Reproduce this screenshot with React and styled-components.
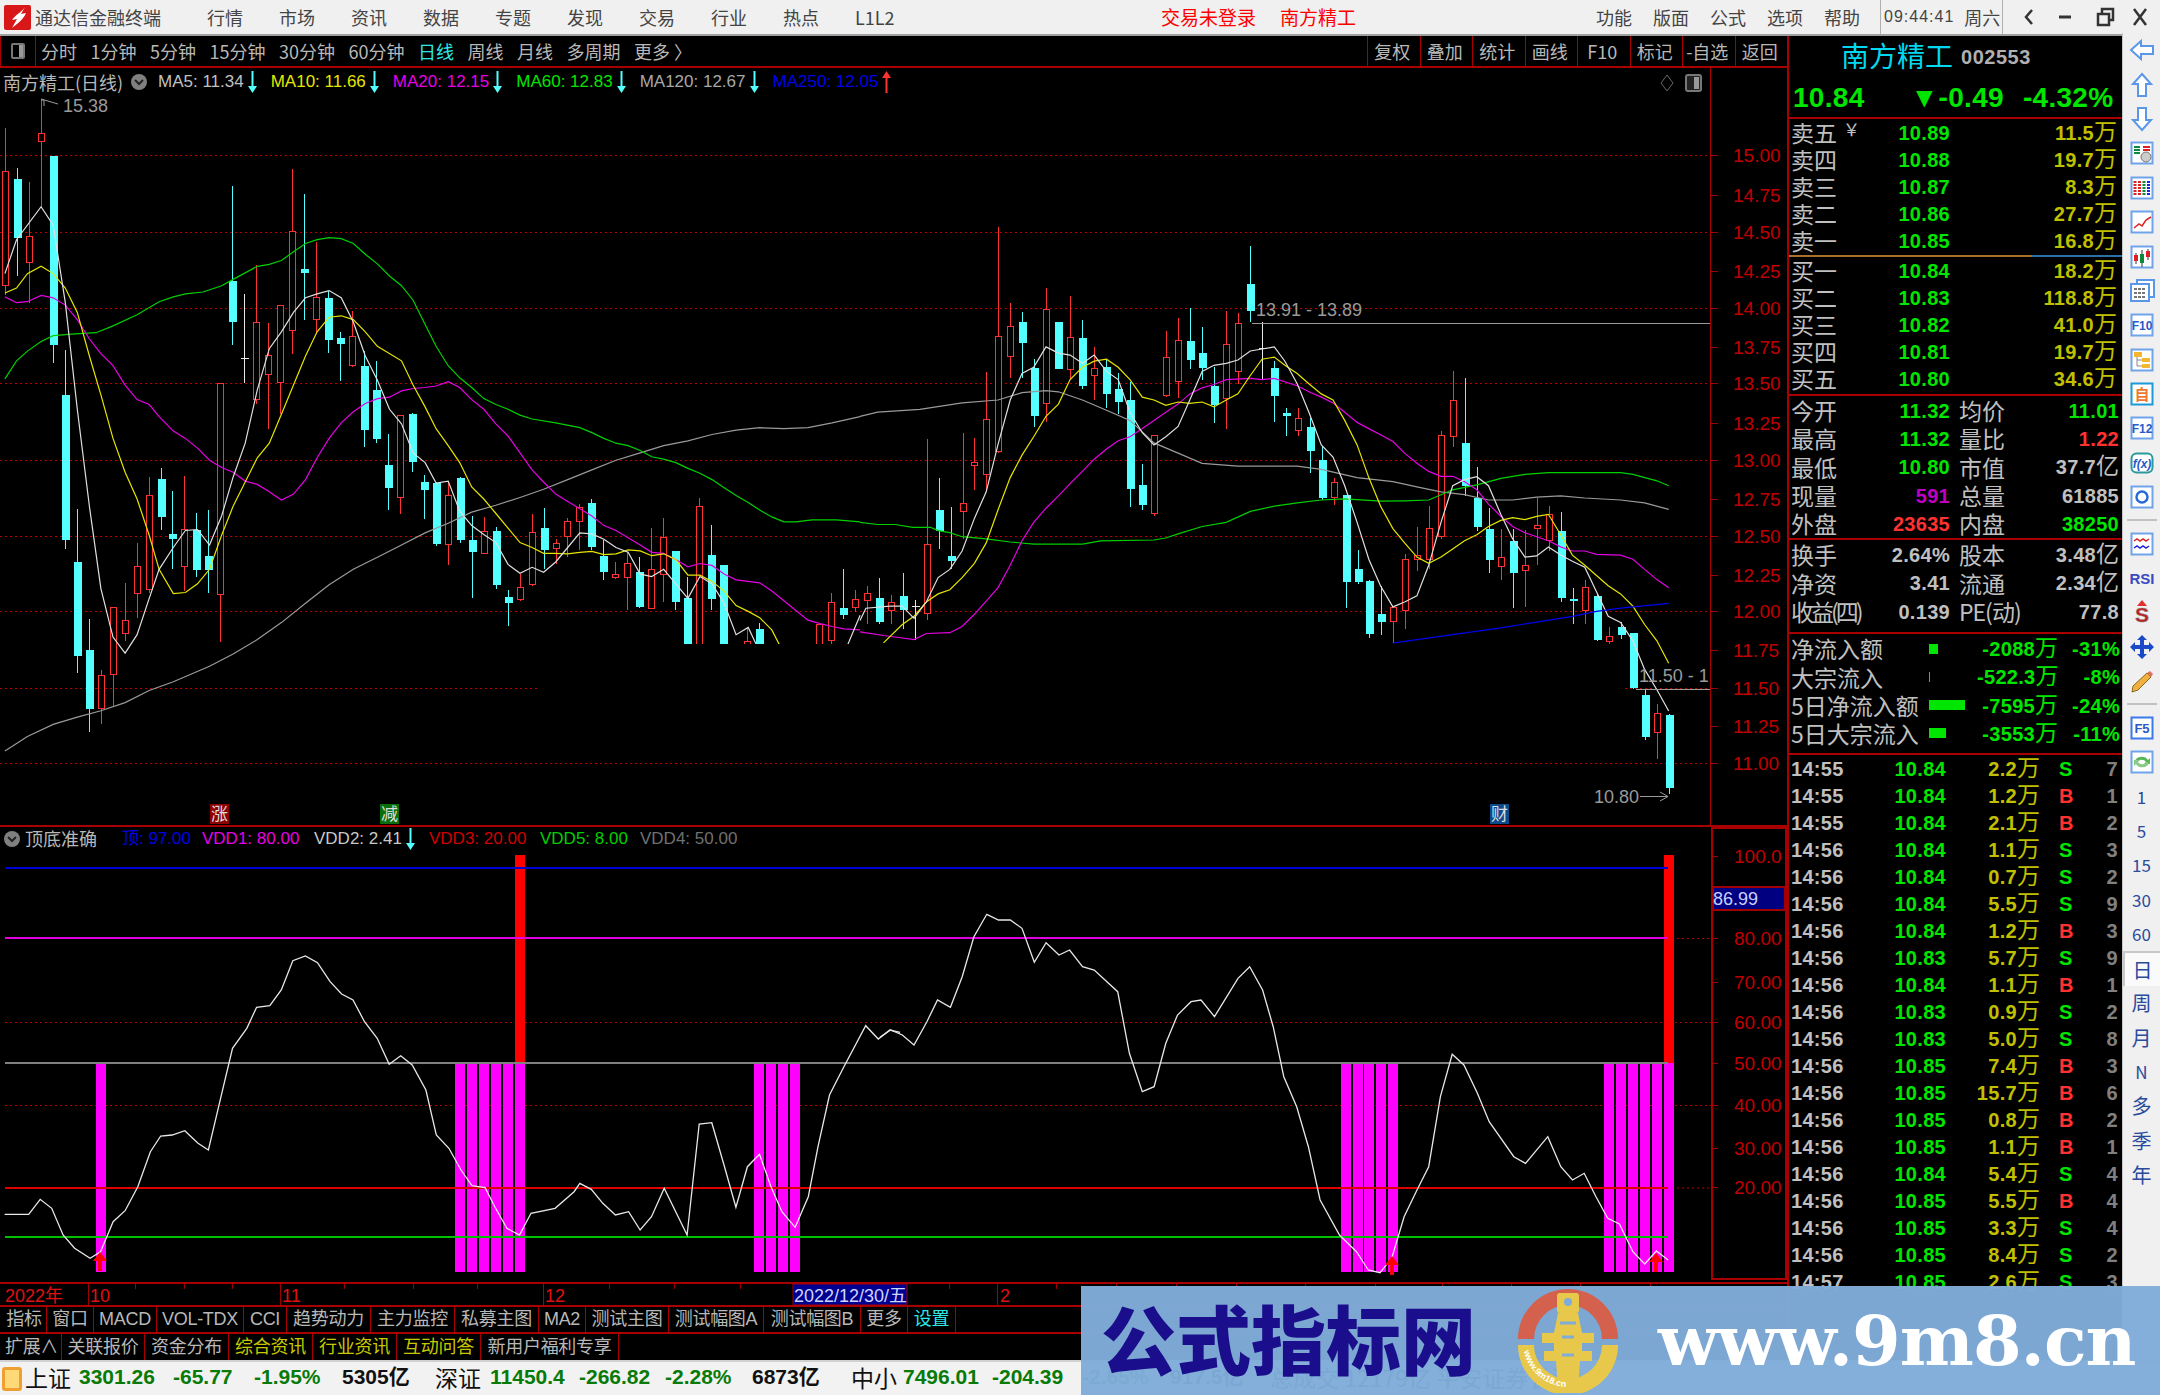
import React from 'react'
import styled, { createGlobalStyle } from 'styled-components'

const SANS = '"Liberation Sans", "Noto Sans CJK SC", sans-serif'
const CJK = '"Noto Sans CJK SC", "Liberation Sans", sans-serif'
const RED_LINE = '#a80000'

const GlobalStyle = createGlobalStyle`
    html, body { margin: 0; padding: 0; background: #000; overflow: hidden; }
    * { box-sizing: border-box; }
`

// chart data was read from two crops, so each has its own scale back to page pixels
const x7 = x => x / 1.823
const y7 = y => 70 + y / 2.063
const x8 = x => 860 + x / 1.704
const y8 = y => 200 + y / 2.45
const x9 = x => x / 1.742
const x10 = x => 880 + x / 1.704
const y9 = y => 820 + y / 3

const parse = (s, fx, fy) => s.trim().split(/\s+/).map(p => {
    const [a, b] = p.split(',').map(Number)
    return `${fx(a).toFixed(1)},${fy(b).toFixed(1)}`
}).join(' ')

const CANDLES = [
    ['r',120,210,445,465],['c',203,225,347,425],['r',232,343,398,480],['r',60,132,148,280],['c',178,178,567,605],
    ['c',578,670,970,988],['c',905,1015,1208,1245],['c',1132,1197,1318,1365],['r',1237,1250,1318,1350],['r',1108,1108,1247,1315],
    ['r',1058,1136,1162,1178],['r',975,1024,1080,1130],['r',840,878,1072,1078],['c',822,843,923,950],['c',868,958,968,1030],
    ['r',838,948,1024,1075],['c',913,948,1032,1045],['c',908,1002,1032,1078],['r',645,646,1083,1180],['c',240,435,520,568],
    ['w',462,596,596,645],['r',402,520,680,690],['r',522,588,628,740],['r',485,485,645,710],['r',205,333,538,585],
    ['c',255,410,418,515],['r',355,470,514,545],['c',455,470,557,583],['c',540,553,566,642],['r',498,550,610,612],
    ['c',580,610,743,778],['c',600,660,762,770],['c',750,815,863,908],['r',712,712,882,917],['c',708,710,808,830],
    ['c',835,850,867,927],['c',850,852,977,982],['r',848,877,978,1022],['c',840,842,970,975],['c',920,970,995,1090],
    ['r',922,952,997,998],['c',942,952,1063,1070],['c',1072,1088,1100,1146],['r',1040,1068,1092,1095],['r',915,955,1062,1065],
    ['c',903,945,990,1030],['r',968,977,988,1020],['r',925,932,962,1005],['r',895,902,932,990],['c',885,893,985,990],
    ['c',970,1003,1035,1052],['r',1015,1040,1048,1050],['r',995,1018,1046,1115],['c',1005,1035,1107,1110],['r',945,1030,1110,1112],
    ['r',925,965,1040,1098],['c',992,992,1097,1115],['c',1045,1090,1300,1300],['r',882,900,1300,1300],['c',938,1000,1092,1115],
    ['c',1022,1022,1300,1300],['c',1190,1190,1300,1300],['r',1150,1180,1300,1300],['c',1140,1153,1300,1300],['c',1190,1190,1300,1300],
    ['c',1190,1190,1300,1300],['c',1190,1190,1300,1300],['c',1190,1190,1300,1300],['r',1140,1143,1300,1300],['r',1078,1098,1177,1184],
    ['c',1030,1110,1125,1132],['r',1072,1092,1108,1118],
    ['r',945,965,982,1038],['c',925,975,1033,1040],['r',968,985,1005,1040],['c',915,970,1005,1050],['w',980,997,997,1078],
    ['r',585,845,1012,1028],['c',680,760,810,855],['c',752,872,884,905],['r',572,743,762,830],['r',583,643,650,710],
    ['r',422,537,673,710],['r',65,335,615,620],['r',252,310,383,435],['c',275,300,350,435],['c',390,412,530,557],
    ['r',215,268,498,545],['c',300,300,413,415],['r',235,338,415,440],['c',295,338,455,462],['r',360,412,430,490],
    ['c',392,408,475,510],['c',425,463,495,525],['c',445,490,707,752],['c',648,698,747,760],['r',575,578,767,775],
    ['r',322,387,478,482],['r',290,345,445,485],['c',265,345,392,415],['c',312,375,412,440],['c',410,455,503,547],
    ['r',272,353,487,560],['r',278,302,420,450],['c',113,205,272,298],['w',300,365,365,440],['c',395,412,480,545],
    ['c',510,522,530,578],['r',510,535,565,578],['c',533,555,615,668],['c',603,637,730,735],['r',682,692,730,748],
    ['c',722,722,935,1000],['c',858,905,935,940],['c',930,933,1063,1072],['c',945,1015,1033,1065],['r',995,998,1033,1085],
    ['r',868,880,1005,1050],['r',800,870,880,910],['r',750,805,880,905],['r',565,578,825,830],['r',418,490,580,605],
    ['c',437,595,700,725],['c',655,730,800,810],['c',755,805,883,915],['r',805,875,897,930],['c',805,835,913,1000],
    ['r',808,895,907,998],['r',730,798,806,895],['r',750,770,835,860],['c',765,812,975,985],['c',950,977,983,1040],
    ['r',930,950,1005,1040],['c',965,970,1078,1080],['r',1045,1070,1082,1087],['c',1035,1047,1065,1075],['c',1060,1062,1195,1197],
    ['c',1200,1212,1315,1322],['r',1235,1258,1305,1370],['c',1260,1262,1440,1455],
]

const MA5_A = '9,420 30,350 75,282 97,320 119,480 141,700 163,900 184,1070 206,1170 228,1203 250,1165 272,1090 290,1030 316,985 338,950 360,948 382,980 404,920 425,840 447,770 469,660 491,575 513,540 535,500 557,470 578,462 600,455 622,470 644,520 666,590 688,640 710,700 732,730 753,790 775,810 795,852 817,848 838,910 860,940 882,958 904,975 926,1020 948,1038 970,1026 991,1036 1013,1015 1035,985 1057,955 1079,957 1101,968 1123,985 1145,995 1167,1040 1188,1045 1210,1030 1232,1060 1254,1090 1276,1045 1298,1060 1320,1100 1342,1165 1364,1150 1385,1200 1540,1200 1568,1125'
const MA5_B = '0,1030 10,1000 51,995 72,995 92,1025 113,985 133,925 153,905 174,860 195,780 215,715 235,600 256,490 276,425 296,410 317,360 338,375 358,380 379,400 399,380 420,420 440,440 460,520 481,570 501,600 521,580 542,555 562,490 583,420 603,405 624,400 644,392 665,370 685,365 706,360 724,395 745,450 765,520 786,600 806,630 826,700 847,790 867,880 887,945 908,997 928,985 949,970 969,895 990,790 1010,700 1030,685 1051,678 1071,700 1092,770 1112,830 1133,875 1153,872 1173,850 1194,870 1214,885 1235,900 1255,960 1275,1020 1296,1035 1317,1080 1337,1150 1358,1200 1378,1252'
const MA10_A = '9,460 30,450 50,420 75,405 97,420 119,450 141,500 163,590 184,670 206,760 228,830 250,885 272,960 290,1030 316,1080 338,1078 360,1060 382,1030 404,960 425,900 447,850 469,800 491,770 513,710 535,650 557,590 578,540 600,510 622,507 644,515 666,540 688,570 732,600 753,650 775,695 795,740 817,775 838,810 860,860 882,885 904,915 926,945 948,975 970,985 991,997 1013,997 1035,998 1057,995 1079,993 1101,1000 1123,998 1145,990 1167,992 1188,1002 1210,998 1232,1010 1254,1042 1276,1042 1298,1055 1320,1075 1342,1105 1364,1117 1385,1130 1407,1155 1425,1195'
const MA10_B = '40,1085 72,1040 92,1020 113,985 133,965 153,955 174,925 195,890 215,840 235,760 256,680 276,625 296,580 317,530 338,500 358,440 379,410 399,395 420,390 440,410 460,440 481,483 501,490 521,503 542,495 562,498 583,495 603,507 624,490 644,475 665,430 685,390 706,385 724,405 745,425 765,450 786,475 806,490 826,540 847,600 867,680 887,750 908,805 928,840 949,875 969,890 990,875 1010,855 1030,835 1051,820 1071,800 1092,785 1112,778 1133,783 1153,775 1173,770 1194,820 1214,870 1235,895 1255,920 1275,945 1296,965 1317,995 1337,1040 1358,1080 1378,1135'
const MA20_A = '9,468 30,480 50,478 75,465 97,470 119,485 141,515 163,555 184,585 206,610 228,650 250,680 272,690 290,715 316,745 338,760 360,780 382,805 404,820 425,830 447,848 469,855 491,870 513,887 535,875 557,845 578,800 600,760 622,728 644,705 666,688 688,678 710,675 732,662 753,657 775,655 795,652 817,643 838,655 860,680 882,700 904,730 926,755 948,790 970,825 991,850 1013,875 1035,890 1057,905 1079,920 1101,940 1123,950 1145,965 1167,980 1188,995 1210,997 1232,1010 1254,1025 1276,1018 1298,1022 1320,1040 1342,1052 1385,1058 1407,1075 1429,1095 1451,1115 1473,1135 1495,1142 1517,1148 1539,1153 1568,1155'
const MA20_B = '0,1058 40,1067 72,1073 92,1077 113,1062 153,1060 174,1045 195,1015 235,950 256,895 276,835 296,790 317,755 338,725 358,695 379,665 399,635 420,610 440,590 460,580 481,560 501,540 521,520 542,500 562,475 583,460 603,452 624,440 665,437 685,440 706,437 745,455 765,470 786,483 806,497 826,520 847,545 867,560 887,575 908,592 928,620 949,645 969,665 990,677 1010,677 1030,690 1051,710 1071,745 1092,775 1112,800 1133,815 1153,825 1173,835 1194,850 1214,860 1235,860 1255,868 1296,870 1317,880 1337,905 1358,930 1378,950'
const MA60_A = '9,637 30,600 50,580 75,560 97,548 130,545 175,542 206,528 250,505 290,478 316,468 338,462 370,458 404,445 425,432 469,405 491,401 513,393 535,375 557,358 578,350 600,346 622,348 644,358 666,380 688,400 710,425 732,445 753,475 775,525 795,570 817,610 838,635 860,655 882,678 904,690 926,700 948,712 970,720 1013,728 1057,738 1079,748 1101,760 1123,770 1145,775 1167,785 1188,798 1210,803 1232,810 1254,822 1276,832 1298,845 1320,862 1342,878 1364,892 1385,908 1407,922 1429,932 1451,932 1480,928 1525,928 1568,932'
const MA60_B = '0,790 30,795 60,795 90,802 120,802 133,810 153,815 174,825 215,830 256,838 296,843 379,843 410,835 501,833 521,828 542,818 583,800 624,790 665,763 706,750 745,742 786,735 826,732 887,738 928,737 969,735 990,722 1010,710 1051,698 1092,682 1133,672 1173,668 1296,668 1317,672 1358,688 1378,700'
const MA120_A = '9,1405 50,1375 97,1350 141,1335 184,1322 228,1305 272,1280 316,1262 382,1230 425,1205 469,1175 513,1140 557,1100 600,1062 644,1030 688,1005 732,980 775,955 817,935 860,912 904,898 948,882 991,865 1035,845 1079,825 1123,805 1167,790 1210,775 1254,765 1298,752 1342,743 1385,738 1429,740 1473,738 1517,728 1568,715'
const MA120_B = '0,530 30,520 102,513 174,497 235,490 276,472 317,467 338,470 379,490 420,515 460,540 501,595 542,620 583,645 644,652 745,652 786,660 847,680 908,690 949,703 990,715 1030,722 1071,735 1112,735 1153,728 1194,725 1235,730 1296,735 1337,742 1378,758'
const MA250_B = '910,1085 1092,1048 1214,1020 1255,1008 1296,1000 1378,988'

const OSC_A = '8,1183 50,1183 70,1138 90,1165 110,1245 130,1285 157,1315 175,1295 197,1205 218,1172 240,1100 262,995 280,948 300,945 322,932 345,970 363,990 385,830 405,685 430,625 447,562 470,557 490,510 510,422 532,408 553,428 575,485 595,522 615,540 635,605 657,655 678,733 698,707 718,735 742,810 760,945 782,985 803,1050 822,1097 845,1103 862,1160 883,1225 905,1245 925,1180 967,1165 1000,1115 1010,1090 1030,1108 1050,1150 1072,1185 1095,1175 1115,1230 1135,1190 1157,1105 1197,1245 1218,912 1240,908 1262,1040 1282,1162 1302,1040 1323,1003 1343,1100 1362,1175 1385,1222 1408,1130 1425,980 1445,825 1470,740 1508,617 1530,657 1550,630 1568,637'
const OSC_B = '0,652 18,630 38,645 58,675 80,605 98,540 120,562 140,470 160,350 182,283 202,300 222,300 242,325 263,427 283,368 305,405 323,390 345,440 365,450 405,515 425,700 447,815 467,800 487,670 507,585 530,545 547,540 570,590 610,475 630,440 652,510 670,620 688,770 710,860 730,980 750,1140 783,1245 812,1295 832,1350 852,1358 872,1315 893,1190 915,1110 935,1040 955,830 975,703 995,735 1018,820 1038,905 1080,1010 1100,1030 1138,950 1160,1040 1180,1080 1200,1060 1220,1130 1240,1195 1260,1212 1283,1295 1303,1332 1323,1293 1343,1320'

const PRICE_LINES = [155, 232, 308, 383, 460, 536, 611, 688, 763]
const PRICE_LABELS = [
    ['15.00', 155], ['14.75', 195], ['14.50', 232], ['14.25', 271], ['14.00', 308], ['13.75', 347], ['13.50', 383], ['13.25', 423], ['13.00', 460],
    ['12.75', 499], ['12.50', 536], ['12.25', 575], ['12.00', 611], ['11.75', 650], ['11.50', 688], ['11.25', 726], ['11.00', 763],
]
const IND_LABELS = [['100.0', 856], ['80.00', 938], ['70.00', 982], ['60.00', 1022], ['50.00', 1063], ['40.00', 1105], ['30.00', 1148], ['20.00', 1187]]
const BAR_INDEX = [8, 38, 39, 40, 41, 42, 43, 63, 64, 65, 66, 112, 113, 114, 115, 116, 134, 135, 136, 137, 138, 139]
const DATE_TICKS = [135, 184, 232, 344, 413, 477, 609, 674, 740, 949, 1056, 1116, 1176, 1236, 1305, 1375, 1442, 1511, 1580, 1650]
const candleX = i => 4.9 + 11.97 * i

const ASKS = [
    ['卖五', '10.89', '11.5'], ['卖四', '10.88', '19.7'], ['卖三', '10.87', '8.3'], ['卖二', '10.86', '27.7'], ['卖一', '10.85', '16.8'],
]
const BIDS = [
    ['买一', '10.84', '18.2'], ['买二', '10.83', '118.8'], ['买三', '10.82', '41.0'], ['买四', '10.81', '19.7'], ['买五', '10.80', '34.6'],
]
const STATS = [
    ['今开', '11.32', '#00e600', '均价', '11.01', '#00e600'],
    ['最高', '11.32', '#00e600', '量比', '1.22', '#ff3232'],
    ['最低', '10.80', '#00e600', '市值', '37.7亿', '#c0c0c0'],
    ['现量', '591', '#c000c0', '总量', '61885', '#c0c0c0'],
    ['外盘', '23635', '#ff3232', '内盘', '38250', '#00e600'],
]
const FINANCE = [
    ['换手', '2.64%', '股本', '3.48亿'],
    ['净资', '3.41', '流通', '2.34亿'],
    ['收益(四)', '0.139', 'PE(动)', '77.8'],
]
const FLOWS = [
    ['净流入额', 9, '-2088', '-31%'],
    ['大宗流入', 1, '-522.3', '-8%'],
    ['5日净流入额', 36, '-7595', '-24%'],
    ['5日大宗流入', 17, '-3553', '-11%'],
]
const TICKS = [
    ['14:55', '10.84', '2.2', 'S', 7], ['14:55', '10.84', '1.2', 'B', 1], ['14:55', '10.84', '2.1', 'B', 2], ['14:56', '10.84', '1.1', 'S', 3],
    ['14:56', '10.84', '0.7', 'S', 2], ['14:56', '10.84', '5.5', 'S', 9], ['14:56', '10.84', '1.2', 'B', 3], ['14:56', '10.83', '5.7', 'S', 9],
    ['14:56', '10.84', '1.1', 'B', 1], ['14:56', '10.83', '0.9', 'S', 2], ['14:56', '10.83', '5.0', 'S', 8], ['14:56', '10.85', '7.4', 'B', 3],
    ['14:56', '10.85', '15.7', 'B', 6], ['14:56', '10.85', '0.8', 'B', 2], ['14:56', '10.85', '1.1', 'B', 1], ['14:56', '10.84', '5.4', 'S', 4],
    ['14:56', '10.85', '5.5', 'B', 4], ['14:56', '10.85', '3.3', 'S', 4], ['14:56', '10.85', '8.4', 'S', 2], ['14:57', '10.85', '2.6', 'S', 3],
]

const MA_ITEMS = [
    ['MA5: 11.34', '#c0c0c0', '#54ffff', false],
    ['MA10: 11.66', '#e6e600', '#54ffff', false],
    ['MA20: 12.15', '#e600e6', '#54ffff', false],
    ['MA60: 12.83', '#00e600', '#54ffff', false],
    ['MA120: 12.67', '#a8a8a8', '#54ffff', false],
    ['MA250: 12.05', '#0000e6', '#ff3232', true],
]
const IND_ITEMS = [
    ['顶: 97.00', '#0000e6', 80],
    ['VDD1: 80.00', '#e600e6', 112],
    ['VDD2: 2.41', '#c8c8c8', 115, true],
    ['VDD3: 20.00', '#d00000', 111],
    ['VDD5: 8.00', '#00d000', 100],
    ['VDD4: 50.00', '#707070', 0],
]

const TABS_ONE = [
    ['指标', 44], ['窗口', 47], ['MACD', 63], ['VOL-TDX', 87], ['CCI', 43], ['趋势动力', 84], ['主力监控', 84], ['私募主图', 84],
    ['MA2', 47], ['测试主图', 83], ['测试幅图A', 95], ['测试幅图B', 97], ['更多', 47], ['设置', 49, '#2ee8e8'],
]
const TABS_TWO = [
    ['扩展∧', 59], ['关联报价', 83], ['资金分布', 84], ['综合资讯', 84, '#c8c800'], ['行业资讯', 84, '#c8c800'], ['互动问答', 84, '#c8c800'], ['新用户福利专享', 139],
]
const PERIODS = ['分时', '1分钟', '5分钟', '15分钟', '30分钟', '60分钟', '日线', '周线', '月线', '多周期', '更多 〉']
const TOOLS = ['复权', '叠加', '统计', '画线', 'F10', '标记', '-自选', '返回']
const MENU = ['行情', '市场', '资讯', '数据', '专题', '发现', '交易', '行业', '热点', 'L1L2']
const RIGHT_MENU = ['功能', '版面', '公式', '选项', '帮助']
const STATUS = [
    ['上证', 'n', 54], ['3301.26', 'g', 94], ['-65.77', 'g', 81], ['-1.95%', 'g', 88], ['5305亿', 'b', 93],
    ['深证', 'n', 55], ['11450.4', 'g', 89], ['-266.82', 'g', 86], ['-2.28%', 'g', 87], ['6873亿', 'b', 99],
    ['中小', 'n', 52], ['7496.01', 'g', 89], ['-204.39', 'g', 90], ['-2.65%', 'g', 88], ['917.5亿', 'b', 100],
    ['总成交 12179亿 平安证券长沙', 'n', 400],
]

const Shell = styled.div`
    position: relative;
    width: 2160px;
    height: 1395px;
    display: flex;
    flex-direction: column;
    overflow: hidden;
    background: #000;
    font-family: ${CJK};
    line-height: 1.15;
`
const TitleBar = styled.div`
    height: 36px;
    flex: none;
    display: flex;
    align-items: center;
    background: #f0f0f0;
    border-bottom: 2px solid #a0a0a0;
    color: #444;
    font-size: 18px;
`
const Logo = styled.svg`
    width: 27px;
    height: 25px;
    margin-left: 4px;
    flex: none;
`
const AppName = styled.span`
    margin-left: 4px;
    width: 126px;
    white-space: nowrap;
`
const Menu = styled.div`
    display: flex;
    gap: 36px;
    margin-left: ${p => p.$left}px;
    white-space: nowrap;
`
const MenuItem = styled.span`
    width: 36px;
`
const Notice = styled.div`
    display: flex;
    gap: 24px;
    margin-left: 270px;
    color: #f00;
    font-size: 19px;
    white-space: nowrap;
`
const RightMenu = styled.div`
    display: flex;
    gap: 21px;
    margin-left: 240px;
    white-space: nowrap;
`
const Clock = styled.div`
    display: flex;
    align-items: center;
    height: 34px;
    margin-left: 20px;
    width: 124px;
    padding-left: 3px;
    gap: 10px;
    border-left: 1px solid #b0b0b0;
    border-right: 1px solid #b0b0b0;
    font-family: ${SANS};
    font-size: 16px;
    letter-spacing: 1px;
    white-space: nowrap;
`
const ClockDay = styled.span`
    font-family: ${CJK};
    font-size: 18px;
    letter-spacing: 0;
`
const WindowButtons = styled.svg`
    width: 157px;
    height: 26px;
    flex: none;
`
const Body = styled.div`
    flex: none;
    height: 1324px;
    display: flex;
`
const LeftColumn = styled.div`
    width: 1787px;
    flex: none;
    display: flex;
    flex-direction: column;
`
const Toolbar = styled.div`
    height: 32px;
    flex: none;
    display: flex;
    align-items: center;
    border-bottom: 2px solid ${RED_LINE};
    color: #b8b8b8;
    font-size: 18px;
`
const ViewToggle = styled.div`
    width: 36px;
    height: 30px;
    flex: none;
    display: flex;
    align-items: center;
    justify-content: center;
    border-left: 1px solid ${RED_LINE};
    border-right: 1px solid ${RED_LINE};
`
const ToggleGlyph = styled.span`
    display: block;
    width: 14px;
    height: 16px;
    border: 2px solid #777;
    border-radius: 2px;
    background: linear-gradient(90deg, transparent 55%, #999 55%);
`
const Periods = styled.div`
    display: flex;
    gap: 13.5px;
    margin-left: 5px;
    white-space: nowrap;
`
const Period = styled.span`
    color: ${p => (p.$on ? '#2ee8e8' : 'inherit')};
`
const Tools = styled.div`
    display: flex;
    margin-left: auto;
    height: 30px;
`
const ToolCell = styled.div`
    width: 52.5px;
    display: flex;
    align-items: center;
    justify-content: center;
    padding-right: 3px;
    border-left: 1px solid ${RED_LINE};
    white-space: nowrap;
`
const MainPane = styled.div`
    height: 759px;
    flex: none;
    display: flex;
    border-bottom: 2px solid ${RED_LINE};
`
const ChartColumn = styled.div`
    width: 1711px;
    flex: none;
    border-right: 1px solid ${RED_LINE};
    display: flex;
    flex-direction: column;
`
const MainLegend = styled.div`
    height: 28px;
    flex: none;
    display: flex;
    align-items: center;
    padding-left: 3px;
    font-family: ${SANS};
    font-size: 17px;
    white-space: nowrap;
    position: relative;
`
const StockLabel = styled.span`
    width: 155px;
    flex: none;
    color: #b8b8b8;
    font-family: ${CJK};
    font-size: 18px;
    display: flex;
    align-items: center;
    gap: 8px;
`
const FoldDot = styled.svg`
    width: 16px;
    height: 16px;
    flex: none;
`
const LegendItem = styled.span`
    display: inline-flex;
    align-items: center;
    color: ${p => p.$color};
    margin-right: 14px;
`
const TrendArrow = styled.svg`
    width: 9px;
    height: 22px;
    margin-left: 4px;
    flex: none;
`
const PaneTools = styled.svg`
    position: absolute;
    right: 6px;
    top: 6px;
    width: 46px;
    height: 18px;
`
const ChartSvg = styled.svg`
    display: block;
    flex: none;
`
const AxisSvg = styled.svg`
    display: block;
    flex: none;
`
const AxisText = styled.text`
    font-family: ${SANS};
    font-size: 19px;
    fill: #c00000;
`
const NoteText = styled.text`
    font-family: ${SANS};
    font-size: 18px;
    fill: #9a9a9a;
`
const BadgeText = styled.text`
    font-family: ${CJK};
    font-size: 17px;
    fill: ${p => p.$color || '#ddd'};
`
const IndicatorPane = styled.div`
    height: 455px;
    flex: none;
    display: flex;
`
const IndicatorColumn = styled.div`
    width: 1711px;
    flex: none;
    display: flex;
    flex-direction: column;
`
const IndicatorLegend = styled.div`
    height: 23px;
    flex: none;
    display: flex;
    align-items: center;
    padding-left: 4px;
    font-family: ${SANS};
    font-size: 17px;
    white-space: nowrap;
`
const IndicatorName = styled.span`
    width: 118px;
    display: flex;
    align-items: center;
    gap: 5px;
    color: #b8b8b8;
    font-family: ${CJK};
    font-size: 18px;
`
const IndicatorItem = styled.span`
    display: inline-flex;
    align-items: center;
    color: ${p => p.$color};
    width: ${p => (p.$w ? `${p.$w}px` : 'auto')};
`
const IndicatorAxis = styled.div`
    width: 76px;
    flex: none;
    border: 2px solid ${RED_LINE};
    margin-bottom: 2px;
`
const DateAxis = styled.div`
    flex: none;
    height: 23px;
    width: 1787px;
    border-top: 2px solid ${RED_LINE};
`
const DateSvg = styled.svg`
    display: block;
`
const DateText = styled.text`
    font-family: ${SANS};
    font-size: 18px;
    fill: ${p => p.$color || '#e01010'};
`
const TabRow = styled.div`
    height: ${p => p.$h}px;
    flex: none;
    display: flex;
    border-top: 2px solid ${RED_LINE};
    padding-left: 2px;
    color: #b8b8b8;
    font-size: 18px;
    white-space: nowrap;
`
const Tab = styled.div`
    width: ${p => p.$w}px;
    flex: none;
    display: flex;
    align-items: center;
    justify-content: center;
    color: ${p => p.$color || 'inherit'};
    border-left: ${p => (p.$first ? 'none' : `1px solid ${RED_LINE}`)};
    border-right: ${p => (p.$last ? `1px solid ${RED_LINE}` : 'none')};
    font-family: ${SANS}, ${CJK};
    letter-spacing: -0.3px;
`
const QuotePanel = styled.div`
    width: 335px;
    flex: none;
    border-left: 2px solid ${RED_LINE};
    color: #c0c0c0;
    overflow: hidden;
    font-size: 23px;
`
const PanelHead = styled.div`
    height: 83px;
    border-bottom: 2px solid ${RED_LINE};
    display: flex;
    flex-direction: column;
`
const NameLine = styled.div`
    height: 43px;
    display: flex;
    align-items: center;
    padding: 0 0 5px 52px;
    gap: 8px;
`
const StockName = styled.span`
    color: #00d8f0;
    font-size: 28px;
    white-space: nowrap;
`
const StockCode = styled.span`
    color: #b0b0b0;
    font-family: ${SANS};
    font-weight: 700;
    font-size: 20px;
    letter-spacing: 0.5px;
    margin-top: 5px;
`
const PriceLine = styled.div`
    height: 38px;
    display: flex;
    align-items: center;
    color: #00e600;
    font-family: ${SANS};
    font-weight: 700;
    font-size: 28px;
    letter-spacing: 0.3px;
    white-space: nowrap;
    padding-left: 4px;
`
const PriceChange = styled.span`
    margin-left: ${p => p.$left}px;
`
const Row = styled.div`
    height: ${p => p.$h}px;
    display: flex;
    align-items: center;
    padding-left: 2px;
    white-space: nowrap;
`
const Label = styled.span`
    width: ${p => p.$w || 90}px;
    flex: none;
    display: flex;
    align-items: center;
    gap: 6px;
    margin-left: ${p => p.$left || 0}px;
    letter-spacing: ${p => p.$track || 0}px;
`
const YuanMark = styled.span`
    font-family: ${SANS};
    font-size: 17px;
    margin-top: -4px;
`
const Num = styled.span`
    width: ${p => (p.$w ? `${p.$w}px` : 'auto')};
    flex: ${p => (p.$w ? 'none' : '1')};
    text-align: right;
    padding-right: ${p => p.$pad || 0}px;
    margin-top: 2px;
    color: ${p => p.$color || '#c0c0c0'};
    font-family: ${SANS};
    font-weight: 700;
    font-size: 20px;
    letter-spacing: 0.3px;
`
const Unit = styled.span`
    font-family: ${CJK};
    font-weight: 400;
    font-size: 23px;
    letter-spacing: 0;
    line-height: 0;
`
const BookDivider = styled.div`
    height: 3px;
    background: linear-gradient(90deg, #a87028 0, #a87028 243px, #2c70a8 243px);
    border-top: 1px solid #000;
`
const Section = styled.div`
    padding-bottom: ${p => p.$pad || 0}px;
    border-bottom: 2px solid ${RED_LINE};
`
const FlowCell = styled.span`
    width: 48px;
    flex: none;
    display: flex;
    align-items: center;
`
const FlowBar = styled.span`
    display: block;
    height: 10px;
    width: ${p => p.$w}px;
    background: #00e600;
`
const SideMark = styled.span`
    width: 20px;
    flex: none;
    margin-left: 19px;
    margin-top: 2px;
    color: ${p => (p.$buy ? '#ff3232' : '#00e600')};
    font-family: ${SANS};
    font-weight: 700;
    font-size: 20px;
`
const SideBar = styled.div`
    flex: 1;
    background: #f0f0f0;
    display: flex;
    flex-direction: column;
    align-items: center;
    margin-top: -3px;
    overflow: hidden;
    border-left: 1px solid #c8c8c8;
`
const SideBtn = styled.div`
    width: 100%;
    height: 34.4px;
    flex: none;
    display: flex;
    align-items: center;
    justify-content: center;
    color: #2a4a9c;
    font-family: ${CJK};
    font-size: ${p => (p.$small ? 17 : 20)}px;
    background: ${p => (p.$on ? '#fafafa' : 'transparent')};
    border-top: ${p => (p.$on ? '2px solid #c8c8c8' : 'none')};
    border-left: ${p => (p.$on ? '2px solid #c8c8c8' : 'none')};
`
const SideIcon = styled.svg`
    width: 24px;
    height: 24px;
    overflow: visible;
`
const SideSep = styled.div`
    height: 12px;
    width: 30px;
    flex: none;
    display: flex;
    align-items: center;
    &::after {
        content: '';
        display: block;
        width: 100%;
        height: 2px;
        background: #c0c0c0;
    }
`
const StatusBar = styled.div`
    height: 35px;
    flex: none;
    display: flex;
    align-items: center;
    background: #f2f2f2;
    border-top: 2px solid #d0d0d0;
    padding-left: 2px;
    white-space: nowrap;
`
const StatusIcon = styled.span`
    display: block;
    width: 20px;
    height: 24px;
    margin-right: 3px;
    flex: none;
    border: 3px solid #f0a030;
    border-radius: 3px;
    background: #ffd878;
`
const StatusCell = styled.span`
    width: ${p => p.$w}px;
    flex: none;
    margin-top: -2px;
    color: ${p => (p.$kind === 'g' ? '#087a08' : '#111')};
    font-family: ${p => (p.$kind === 'n' ? CJK : SANS)};
    font-weight: ${p => (p.$kind === 'n' ? 400 : 700)};
    font-size: ${p => (p.$kind === 'n' ? 23 : 21)}px;
`
const Watermark = styled.div`
    position: absolute;
    left: 1081px;
    top: 1286px;
    width: 1079px;
    height: 109px;
    display: flex;
    align-items: center;
    padding-left: 20px;
    background: rgba(127, 172, 217, 0.97);
`
const MarkCn = styled.span`
    width: 415px;
    flex: none;
    margin-top: -8px;
    color: #1b0e8c;
    font-family: ${CJK};
    font-weight: 900;
    font-size: 75px;
    line-height: 1;
    white-space: nowrap;
`
const MarkLogo = styled.svg`
    width: 104px;
    height: 104px;
    flex: none;
`
const MarkUrl = styled.span`
    margin-left: 38px;
    color: #fff;
    font-family: "DejaVu Serif", "Liberation Serif", serif;
    font-weight: 700;
    font-size: 70px;
    line-height: 1;
    white-space: nowrap;
    letter-spacing: -1px;
`

const Fold = () => (
    <FoldDot viewBox="0 0 16 16">
        <circle cx="8" cy="8" r="8" fill="#808080" />
        <path d="M4 6l4 4 4-4" fill="none" stroke="#222" strokeWidth="2" />
    </FoldDot>
)

const Trend = ({ color, up }) => (
    <TrendArrow viewBox="0 0 9 22">
        {up
            ? <path d="M4.5 0L9 7H5.5V22H3.5V7H0z" fill={color} />
            : <path d="M4.5 22L9 15H5.5V0H3.5V15H0z" fill={color} />}
    </TrendArrow>
)

const Candle = ({ data, i }) => {
    const [c, w, t, b, l] = data
    const fy = i < 72 ? y7 : y8
    const x = Math.round(candleX(i)) + 0.5
    const [yw, yt, yb, yl] = [fy(w), fy(t), fy(b), fy(l)]
    if (c === 'w') {
        return (
            <g stroke="#e8e8e8">
                <line x1={x} x2={x} y1={yw} y2={yl} />
                <line x1={x - 4} x2={x + 4} y1={yt} y2={yt} />
            </g>
        )
    }
    if (c === 'c') {
        return (
            <g>
                <line x1={x} x2={x} y1={yw} y2={yl} stroke="#54ffff" />
                <rect x={x - 4} y={yt} width="8" height={Math.max(yb - yt, 2)} fill="#54ffff" />
            </g>
        )
    }
    return (
        <g stroke="#ff3232">
            <line x1={x} x2={x} y1={yw} y2={yt} />
            <line x1={x} x2={x} y1={yb} y2={yl} />
            <rect x={x - 3} y={yt} width="6" height={Math.max(yb - yt, 3)} fill="#000" />
        </g>
    )
}

const MA = ({ d, fx, fy, color, width = 1.2 }) => (
    <polyline points={parse(d, fx, fy)} fill="none" stroke={color} strokeWidth={width} />
)

const MainChart = () => (
    <ChartSvg width="1710" height="730" viewBox="0 96 1710 730">
        {PRICE_LINES.map(y => (
            <line key={y} x1="0" x2="1710" y1={y + 0.5} y2={y + 0.5} stroke="#b80000" strokeDasharray="2 3" />
        ))}
        <g shapeRendering="crispEdges">
            {CANDLES.map((c, i) => <Candle key={i} data={c} i={i} />)}
        </g>
        <MA d={MA120_A} fx={x7} fy={y7} color="#9a9a9a" />
        <MA d={MA120_B} fx={x8} fy={y8} color="#9a9a9a" />
        <MA d={MA60_A} fx={x7} fy={y7} color="#00d000" />
        <MA d={MA60_B} fx={x8} fy={y8} color="#00d000" />
        <MA d={MA20_A} fx={x7} fy={y7} color="#e600e6" />
        <MA d={MA20_B} fx={x8} fy={y8} color="#e600e6" />
        <MA d={MA10_A} fx={x7} fy={y7} color="#e6e600" />
        <MA d={MA10_B} fx={x8} fy={y8} color="#e6e600" />
        <MA d={MA5_A} fx={x7} fy={y7} color="#e0e0e0" />
        <MA d={MA5_B} fx={x8} fy={y8} color="#e0e0e0" />
        <MA d={MA250_B} fx={x8} fy={y8} color="#0000f0" />
        <rect x="537" y="644" width="1085" height="94" fill="#000" />
        <path d="M41 100h3v6M41 99l17 5" fill="none" stroke="#9a9a9a" />
        <NoteText x="63" y="112">15.38</NoteText>
        <line x1="1252" x2="1710" y1="323.5" y2="323.5" stroke="#9a9a9a" />
        <NoteText x="1256" y="316">13.91 - 13.89</NoteText>
        <line x1="1636" x2="1710" y1="689.5" y2="689.5" stroke="#9a9a9a" />
        <NoteText x="1639" y="682">11.50 - 1</NoteText>
        <NoteText x="1594" y="803">10.80</NoteText>
        <path d="M1640 796.5h28M1660 792l8 4.500-8 4.500" fill="none" stroke="#9a9a9a" />
        <rect x="210" y="804" width="19" height="20" fill="#8c0000" />
        <BadgeText x="211" y="820">涨</BadgeText>
        <rect x="380" y="804" width="19" height="20" fill="#0a6e0a" />
        <BadgeText x="381" y="820">减</BadgeText>
        <rect x="1490" y="804" width="19" height="20" fill="#0c4a8c" />
        <BadgeText x="1491" y="820">财</BadgeText>
    </ChartSvg>
)

const MainAxis = () => (
    <AxisSvg width="76" height="757" viewBox="1711 68 76 757">
        {PRICE_LABELS.map(([t, y]) => (
            <g key={t}>
                <line x1="1711" x2="1718" y1={y + 0.5} y2={y + 0.5} stroke="#a00000" />
                <AxisText x="1733" y={y + 7}>{t}</AxisText>
            </g>
        ))}
    </AxisSvg>
)

const GUIDES = [[868, '#0000d8'], [938, '#e000e0'], [1063, '#808080'], [1187.5, '#e00000'], [1237, '#00c000']]

const UpArrow = ({ x, y }) => (
    <path d={`M${x} ${y}l7 9h-5v10h-4v-10h-5z`} fill="#ff0000" />
)

const IndicatorChart = () => (
    <ChartSvg width="1711" height="430" viewBox="0 850 1711 430">
        {[938, 1022, 1105, 1187.5].map(y => (
            <line key={y} x1={y === 1022 || y === 1105 ? 5 : 1667} x2="1711" y1={y + 0.5} y2={y + 0.5} stroke="#b80000" strokeDasharray="2 3" />
        ))}
        <g shapeRendering="crispEdges">
            {BAR_INDEX.map(i => (
                <rect key={i} x={Math.round(candleX(i)) - 5} y="1063" width="10" height="209" fill="#ff00ff" />
            ))}
            <rect x={Math.round(candleX(43)) - 5} y="855" width="10" height="208" fill="#ff0000" />
            <rect x={Math.round(candleX(139)) - 5} y="855" width="10" height="208" fill="#ff0000" />
            {GUIDES.map(([y, color]) => (
                <line key={y} x1="5" x2="1667.500" y1={y} y2={y} stroke={color} strokeWidth="2" />
            ))}
        </g>
        <polyline points={parse(OSC_A, x9, y9)} fill="none" stroke="#e8e8e8" strokeWidth="1.300" />
        <polyline points={parse(OSC_B, x10, y9)} fill="none" stroke="#e8e8e8" strokeWidth="1.300" />
        <UpArrow x={100} y={1252} />
        <UpArrow x={1392} y={1256} />
        <UpArrow x={1656} y={1253} />
    </ChartSvg>
)

const IndicatorScale = () => (
    <AxisSvg width="72" height="449" viewBox="1713 829 72 449">
        {IND_LABELS.map(([t, y]) => (
            <g key={t}>
                <line x1="1713" x2="1718" y1={y + 0.5} y2={y + 0.5} stroke="#a00000" />
                <AxisText x="1734" y={y + 7}>{t}</AxisText>
            </g>
        ))}
        <rect x="1713" y="887" width="72" height="23" fill="#000080" stroke="#a00000" strokeWidth="2" />
        <DateText x="1713" y="905" $color="#c8d0ff">86.99</DateText>
    </AxisSvg>
)

const DateScale = () => (
    <DateSvg width="1787" height="21" viewBox="0 1284 1787 21">
        {[88, 280, 543, 997].map(x => (
            <line key={x} x1={x + 0.5} x2={x + 0.5} y1="1284" y2="1305" stroke="#a00000" />
        ))}
        {DATE_TICKS.map(x => (
            <line key={x} x1={x + 0.5} x2={x + 0.5} y1="1284" y2="1289" stroke="#a00000" />
        ))}
        <DateText x="5" y="1302">2022年</DateText>
        <DateText x="90" y="1302">10</DateText>
        <DateText x="282" y="1302">11</DateText>
        <DateText x="545" y="1302">12</DateText>
        <rect x="793" y="1284" width="114" height="21" fill="#000090" stroke="#a00000" />
        <DateText x="794" y="1302" $color="#d0d4ff">2022/12/30/五</DateText>
        <DateText x="1000" y="1302">2</DateText>
    </DateSvg>
)

// the right hand tool strip, one small drawing per button
const FRAME = <rect x="1.500" y="1.500" width="21" height="21" fill="#fff" stroke="#6ea4ea" strokeWidth="2" />
const BLUE = '#5b97e8'
const frameText = (t, color, size = 12) => (
    <>
        {FRAME}
        <text x="12" y="17" fontFamily={SANS} fontSize={size} fontWeight="700" textAnchor="middle" fill={color}>{t}</text>
    </>
)
const SIDE_ICONS = [
    <path d="M1 12l10-9v5h12v8H11v5z" fill="#fff" stroke={BLUE} strokeWidth="2" />,
    <path d="M12 1l9 10h-5v12H8V11H3z" fill="#fff" stroke={BLUE} strokeWidth="2" />,
    <path d="M12 23l9-10h-5V1H8v12H3z" fill="#fff" stroke={BLUE} strokeWidth="2" />,
    <>{FRAME}<path d="M4 6h6M4 9h6M4 12h6" stroke="#0a8a3a" strokeWidth="2" /><path d="M13 6h7M13 9h7" stroke="#e02020" strokeWidth="2" /><circle cx="16" cy="16" r="5" fill="#ccc" stroke="#777" /></>,
    <>{FRAME}<path d="M5 5v14" stroke="#e02020" strokeWidth="3" strokeDasharray="2 1" /><path d="M9.500 5v14" stroke="#e02020" strokeWidth="3" strokeDasharray="2 1" /><path d="M14 5v14" stroke="#0a8a3a" strokeWidth="3" strokeDasharray="2 1" /><path d="M18.500 5v14" stroke="#2020e0" strokeWidth="3" strokeDasharray="2 1" /></>,
    <>{FRAME}<path d="M4 18l5-4 3 2 4-6 5-3" fill="none" stroke="#e02020" strokeWidth="1.500" /></>,
    <>{FRAME}<path d="M6 8v11M12 5v17M18 4v11" stroke="#333" /><rect x="4" y="10" width="4" height="6" fill="#e02020" /><rect x="10" y="9" width="4" height="9" fill="#0a8a3a" /><rect x="16" y="6" width="4" height="6" fill="#e02020" /></>,
    <><rect x="7" y="1" width="17" height="17" fill="#fff" stroke={BLUE} strokeWidth="2" /><rect x="1" y="5" width="18" height="17" fill="#fff" stroke={BLUE} strokeWidth="2" /><path d="M4 10h12M4 14h12M4 18h12" stroke="#777" strokeWidth="2" strokeDasharray="3 1" /></>,
    frameText('F10', '#2a5ac8'),
    <>{FRAME}<rect x="4" y="4" width="8" height="5" fill="#f4b830" /><rect x="12" y="10" width="8" height="4" fill="#f4b830" /><rect x="12" y="16" width="8" height="4" fill="#f4b830" /><path d="M7 9v9h5M7 12h5" fill="none" stroke="#888" /></>,
    <><rect x="1.500" y="1.500" width="21" height="21" fill="#fff" stroke="#1a9ad8" strokeWidth="2" /><text x="12" y="18" fontFamily={CJK} fontSize="15" fontWeight="700" textAnchor="middle" fill="#f07830">自</text></>,
    frameText('F12', '#2a5ac8'),
    <><rect x="1.500" y="2.500" width="21" height="19" rx="5" fill="#fff" stroke="#2a9a9a" strokeWidth="2" /><text x="12" y="17" fontFamily={SANS} fontSize="12" fontStyle="italic" fontWeight="700" textAnchor="middle" fill="#2a5ac8">f(x)</text></>,
    <>{FRAME}<circle cx="12" cy="12" r="5.500" fill="none" stroke="#2a6ad8" strokeWidth="2.500" /></>,
    null,
    <>{FRAME}<path d="M4 9l3-2 3 2 3-2 3 2 3-2" fill="none" stroke="#e02020" strokeWidth="1.500" /><path d="M4 16l3-2 3 2 3-2 3 2 3-2" fill="none" stroke="#2020e0" strokeWidth="1.500" /></>,
    <text x="12" y="18" fontFamily={SANS} fontSize="15" fontWeight="700" textAnchor="middle" fill="#3a4ac0">RSI</text>,
    <><path d="M12 0l5 6H7z" fill="#e03030" /><text x="12" y="22" fontFamily={SANS} fontSize="21" fontWeight="700" textAnchor="middle" fill="#c02020" stroke="#888" strokeWidth="0.500">S</text></>,
    <path d="M12 0l5 5h-3v5h5V7l5 5-5 5v-3h-5v5h3l-5 5-5-5h3v-5H5v3l-5-5 5-5v3h5V5H7z" fill="#1a4ac8" />,
    <><path d="M3 17L17 4l4 4L8 21l-6 2z" fill="#f0b040" stroke="#8a6a20" /><path d="M17 4l4 4 2-3-3-3z" fill="#e07060" /></>,
    null,
    <><rect x="1.500" y="1.500" width="21" height="21" fill="#fff" stroke="#3a7ae8" strokeWidth="2" /><text x="12" y="17" fontFamily={SANS} fontSize="13" fontWeight="700" textAnchor="middle" fill="#2a5ac8">F5</text></>,
    <>{FRAME}<path d="M5 11a7 6 0 0 1 13-1l2-2v6h-6l2-2a5 4 0 0 0-9 0z" fill="#58b858" /><path d="M19 13a7 6 0 0 1-13 1l-2 2v-6h6l-2 2a5 4 0 0 0 9 0z" fill="#88cc88" /></>,
]
const SIDE_TEXT = [['1', 1], ['5', 1], ['15', 1], ['30', 1], ['60', 1], ['日', 0, 1], ['周'], ['月'], ['N', 1], ['多'], ['季'], ['年']]

const Wan = () => <Unit>万</Unit>

const App = () => (
    <Shell>
        <GlobalStyle />
        <TitleBar>
            <Logo viewBox="0 0 27 25">
                <rect width="27" height="25" rx="2" fill="#d81818" />
                <path d="M21 2c-3 5-9 7-13 13l5-1-5 9c6-5 11-8 14-15l-5 1z" fill="#fff" />
            </Logo>
            <AppName>通达信金融终端</AppName>
            <Menu $left={46}>
                {MENU.map(m => <MenuItem key={m}>{m}</MenuItem>)}
            </Menu>
            <Notice>
                <span>交易未登录</span>
                <span>南方精工</span>
            </Notice>
            <RightMenu>
                {RIGHT_MENU.map(m => <MenuItem key={m}>{m}</MenuItem>)}
            </RightMenu>
            <Clock>
                <span>09:44:41</span>
                <ClockDay>周六</ClockDay>
            </Clock>
            <WindowButtons viewBox="0 0 157 26">
                <path d="M29 6l-6 7 6 7" fill="none" stroke="#333" strokeWidth="2.500" />
                <path d="M56 13h12" stroke="#333" strokeWidth="3" />
                <path d="M95 10h11v11H95zM99 10V5h11v11h-4" fill="none" stroke="#333" strokeWidth="2.500" />
                <path d="M131 5l12 16M143 5l-12 16" stroke="#333" strokeWidth="2.500" />
            </WindowButtons>
        </TitleBar>
        <Body>
            <LeftColumn>
                <Toolbar>
                    <ViewToggle><ToggleGlyph /></ViewToggle>
                    <Periods>
                        {PERIODS.map(p => <Period key={p} $on={p === '日线'}>{p}</Period>)}
                    </Periods>
                    <Tools>
                        {TOOLS.map(t => <ToolCell key={t}>{t}</ToolCell>)}
                    </Tools>
                </Toolbar>
                <MainPane>
                    <ChartColumn>
                        <MainLegend>
                            <StockLabel>南方精工(日线)<Fold /></StockLabel>
                            {MA_ITEMS.map(([t, color, arrow, up]) => (
                                <LegendItem key={t} $color={color}>
                                    {t}
                                    <Trend color={arrow} up={up} />
                                </LegendItem>
                            ))}
                            <PaneTools viewBox="0 0 46 18">
                                <path d="M9 1l6 8-6 8-6-8z" fill="none" stroke="#666" />
                                <rect x="28" y="1" width="15" height="16" rx="2" fill="#222" stroke="#777" strokeWidth="2" />
                                <rect x="36" y="3" width="5" height="12" fill="#999" />
                            </PaneTools>
                        </MainLegend>
                        <MainChart />
                    </ChartColumn>
                    <MainAxis />
                </MainPane>
                <IndicatorPane>
                    <IndicatorColumn>
                        <IndicatorLegend>
                            <IndicatorName><Fold />顶底准确</IndicatorName>
                            {IND_ITEMS.map(([t, color, w, arrow]) => (
                                <IndicatorItem key={t} $color={color} $w={w}>
                                    {t}
                                    {arrow && <Trend color="#54ffff" />}
                                </IndicatorItem>
                            ))}
                        </IndicatorLegend>
                        <IndicatorChart />
                    </IndicatorColumn>
                    <IndicatorAxis>
                        <IndicatorScale />
                    </IndicatorAxis>
                </IndicatorPane>
                <DateAxis><DateScale /></DateAxis>
                <TabRow $h={27}>
                    {TABS_ONE.map(([t, w, color], i) => (
                        <Tab key={t} $w={w} $color={color} $first={i === 0} $last={i === TABS_ONE.length - 1}>{t}</Tab>
                    ))}
                </TabRow>
                <TabRow $h={28}>
                    {TABS_TWO.map(([t, w, color], i) => (
                        <Tab key={t} $w={w} $color={color} $first={i === 0} $last={i === TABS_TWO.length - 1}>{t}</Tab>
                    ))}
                </TabRow>
            </LeftColumn>
            <QuotePanel>
                <PanelHead>
                    <NameLine>
                        <StockName>南方精工</StockName>
                        <StockCode>002553</StockCode>
                    </NameLine>
                    <PriceLine>
                        <span>10.84</span>
                        <PriceChange $left={46}>▼-0.49</PriceChange>
                        <PriceChange $left={19}>-4.32%</PriceChange>
                    </PriceLine>
                </PanelHead>
                {ASKS.map(([l, p, v], i) => (
                    <Row key={l} $h={27}>
                        <Label>{l}{i === 0 && <YuanMark>￥</YuanMark>}</Label>
                        <Num $w={69} $color="#00e600">{p}</Num>
                        <Num $color="#c0c000" $pad={5}>{v}<Wan /></Num>
                    </Row>
                ))}
                <BookDivider />
                {BIDS.map(([l, p, v]) => (
                    <Row key={l} $h={27}>
                        <Label>{l}</Label>
                        <Num $w={69} $color="#00e600">{p}</Num>
                        <Num $color="#c0c000" $pad={5}>{v}<Wan /></Num>
                    </Row>
                ))}
                <Section $pad={2} />
                <Section $pad={1}>
                    {STATS.map(([a, av, ac, b, bv, bc]) => (
                        <Row key={a} $h={28.3}>
                            <Label>{a}</Label>
                            <Num $w={69} $color={ac}>{av}</Num>
                            <Label $w={50} $left={9}>{b}</Label>
                            <Num $color={bc} $pad={3}>{bv.replace('亿', '')}{bv.includes('亿') && <Unit>亿</Unit>}</Num>
                        </Row>
                    ))}
                </Section>
                <Section $pad={7}>
                    {FINANCE.map(([a, av, b, bv]) => (
                        <Row key={a} $h={28.3}>
                            <Label $track={a.length > 2 ? -3 : 0}>{a}</Label>
                            <Num $w={69}>{av}</Num>
                            <Label $w={50} $left={9} $track={b.length > 2 ? -1 : 0}>{b}</Label>
                            <Num $pad={3}>{bv.replace('亿', '')}{bv.includes('亿') && <Unit>亿</Unit>}</Num>
                        </Row>
                    ))}
                </Section>
                <Section $pad={5}>
                    {FLOWS.map(([l, w, v, pct]) => (
                        <Row key={l} $h={28.3}>
                            <Label $w={138}>{l}</Label>
                            <FlowCell><FlowBar $w={w} /></FlowCell>
                            <Num $w={81} $color="#00e600">{v}<Wan /></Num>
                            <Num $color="#00e600" $pad={2}>{pct}</Num>
                        </Row>
                    ))}
                </Section>
                {TICKS.map(([time, p, v, side, n], i) => (
                    <Row key={i} $h={27}>
                        <Num $w={52}>{time}</Num>
                        <Num $w={103} $color="#00e600">{p}</Num>
                        <Num $w={94} $color="#c0c000">{v}<Wan /></Num>
                        <SideMark $buy={side === 'B'}>{side}</SideMark>
                        <Num $color="#808080" $pad={4}>{n}</Num>
                    </Row>
                ))}
            </QuotePanel>
            <SideBar>
                {SIDE_ICONS.map((icon, i) => (icon
                    ? <SideBtn key={i}><SideIcon viewBox="0 0 24 24">{icon}</SideIcon></SideBtn>
                    : <SideSep key={i} />))}
                {SIDE_TEXT.map(([t, small, on]) => (
                    <SideBtn key={t} $small={small} $on={on}>{t}</SideBtn>
                ))}
            </SideBar>
        </Body>
        <StatusBar>
            <StatusIcon />
            {STATUS.map(([t, kind, w]) => <StatusCell key={t} $kind={kind} $w={w}>{t}</StatusCell>)}
        </StatusBar>
        <Watermark>
            <MarkCn>公式指标网</MarkCn>
            <MarkLogo viewBox="0 0 104 104">
                <defs>
                    <path id="ringText" d="M8 62a45 45 0 0 0 44 36" />
                </defs>
                <path d="M2 50a50 50 0 0 1 100 0H86a34 34 0 0 0-68 0z" fill="#d4604e" />
                <path d="M2 56a50 50 0 0 0 100 0H86a34 34 0 0 1-68 0z" fill="#e8c84a" />
                <rect x="41" y="4" width="22" height="20" rx="3" fill="#e8c84a" />
                <circle cx="52" cy="13" r="4" fill="#7facd9" />
                <path d="M42 24h20l4 20h12v10H66v8h10v10H64l-2 28H42l-2-28H28V62h10v-8H26V44h12z" fill="#e8c84a" />
                <path d="M44 34h16M46 48h12M46 66h12" stroke="#7facd9" strokeWidth="3" />
                <text fontFamily={SANS} fontSize="9" fontWeight="700" fill="#fff">
                    <textPath href="#ringText">www.9m18.cn</textPath>
                </text>
            </MarkLogo>
            <MarkUrl>www.9m8.cn</MarkUrl>
        </Watermark>
    </Shell>
)

export default App
